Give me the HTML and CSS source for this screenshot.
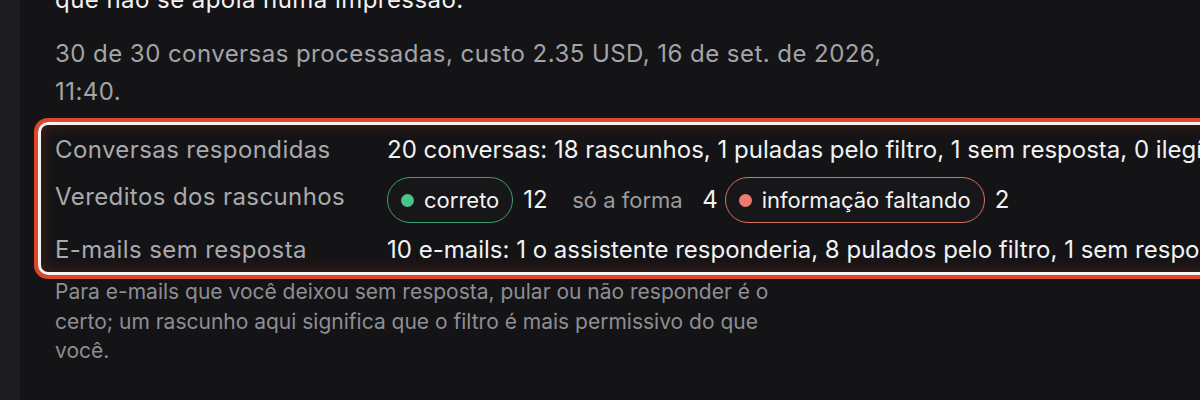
FILE: index.html
```html
<!DOCTYPE html>
<html lang="pt">
<head>
<meta charset="utf-8">
<link rel="stylesheet" href="styles.css">
</head>
<body>
<div class="layout">
  <aside class="rail"></aside>
  <main class="main">
    <p class="lead">que não se apoia numa impressão.</p>
    <p class="meta">30 de 30 conversas processadas, custo 2.35 USD, 16 de set. de 2026, 11:40.</p>
    <div class="summary">
      <div class="label">Conversas respondidas</div>
      <div class="value">20 conversas: 18 rascunhos, 1 puladas pelo filtro, 1 sem resposta, 0 ilegíveis</div>
      <div class="label label-chips">Vereditos dos rascunhos</div>
      <div class="value verdicts">
        <span class="chip chip-ok"><span class="dot"></span>correto</span>
        <span class="count">12</span>
        <span class="chip chip-plain">só a forma</span>
        <span class="count">4</span>
        <span class="chip chip-miss"><span class="dot"></span>informação faltando</span>
        <span class="count">2</span>
      </div>
      <div class="label">E-mails sem resposta</div>
      <div class="value">10 e-mails: 1 o assistente responderia, 8 pulados pelo filtro, 1 sem resposta</div>
    </div>
    <p class="note">Para e-mails que você deixou sem resposta, pular ou não responder é o certo; um rascunho aqui significa que o filtro é mais permissivo do que você.</p>
  </main>
</div>
</body>
</html>
```
FILE: styles.css
```css
html, body {
  margin: 0;
  padding: 0;
  height: 100%;
  overflow: hidden;
  background: #141416;
  font-family: Inter, "Noto Sans", sans-serif;
}

.layout {
  display: flex;
  height: 100%;
}

.rail {
  flex: 0 0 20px;
  background: #1c1c1f;
}

.main {
  flex: 1;
  padding-left: 35px;
  min-width: 0;
}

.lead {
  margin: -18px 0 0;
  font-size: 24px;
  line-height: 36px;
  letter-spacing: 0.45px;
  color: #f2f2f3;
}

.meta {
  margin: 17px 0 0;
  max-width: 850px;
  font-size: 24px;
  line-height: 38px;
  letter-spacing: 0.45px;
  color: #a3a3a8;
}

.summary {
  margin: 11px 0 0 -17px;
  width: 1300px;
  display: grid;
  grid-template-columns: 332px 1fr;
  row-gap: 9px;
  align-items: start;
  padding: 7px 0 4px 14px;
  border: 3px solid #f7f3f1;
  border-radius: 10px;
  box-shadow: 0 0 0 4px #e0462b, inset 0 0 16px rgba(205, 60, 40, 0.28);
  line-height: 36px;
}

.label {
  font-size: 24px;
  letter-spacing: 0.4px;
  color: #a9a9ae;
  white-space: nowrap;
}

.label-chips {
  padding-top: 2px;
}

.value {
  font-size: 24px;
  color: #f2f2f3;
  white-space: nowrap;
}

.verdicts {
  display: flex;
  align-items: center;
  gap: 10px;
}

.chip {
  display: inline-flex;
  align-items: center;
  gap: 10px;
  height: 46px;
  box-sizing: border-box;
  border: 1.5px solid transparent;
  border-radius: 23px;
  padding: 0 13px 0 13px;
  font-size: 22px;
  color: #f2f2f3;
  background: #171719;
}

.chip .dot {
  width: 13px;
  height: 13px;
  border-radius: 50%;
}

.chip-ok {
  border-color: #3c9f72;
}

.chip-ok .dot {
  background: #4cc38a;
}

.chip-miss {
  border-color: #d9705f;
  margin-left: -3px;
}

.chip-miss .dot {
  background: #f07a6c;
}

.chip-plain {
  background: transparent;
  color: #9b9ba0;
  padding: 0 8.5px;
  margin-left: 5px;
}

.count {
  font-size: 24px;
  color: #f2f2f3;
}

.note {
  margin: 2px 0 0;
  max-width: 760px;
  font-size: 21px;
  line-height: 29.5px;
  color: #8e8e93;
}
```
